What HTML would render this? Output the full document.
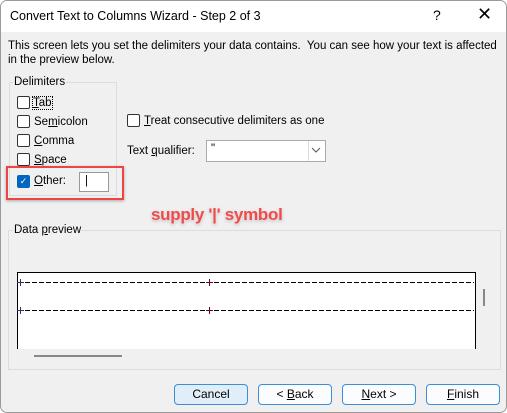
<!DOCTYPE html><html><head><style>
*{margin:0;padding:0;box-sizing:border-box}
body{width:507px;height:413px;background:#fff;font-family:"Liberation Sans",sans-serif;font-size:11.5px;color:#000;position:relative;overflow:hidden}
.win{position:absolute;left:0;top:0;width:507px;height:413px;border:1px solid #9a9a9a;border-radius:7px;background:#f0f0f0;overflow:hidden}
.tb{position:absolute;left:0;top:0;width:100%;height:31px;background:#fff}
.a{position:absolute;white-space:nowrap}
.cb{position:absolute;width:13px;height:13px;border:1px solid #333;border-radius:2px;background:#fff}
.grp{position:absolute;border:1px solid #dcdcdc}
.btn{position:absolute;top:383px;width:74px;height:21px;border:1px solid #3c8fd6;border-radius:4px;background:#fafcfe;text-align:center;line-height:19px;font-size:12px}
.dash{position:absolute;left:17px;width:456px;height:1px;background:repeating-linear-gradient(90deg,#000 0 5px,transparent 5px 7px)}
u{text-decoration:underline}
.pl{position:absolute;width:7px;height:7px}
</style></head><body><div class="win">
<div class="tb"></div>
<div class="a" style="left:9px;top:8px;font-size:12.5px">Convert Text to Columns Wizard - Step 2 of 3</div>
<div class="a" style="left:432px;top:6px;font-size:14px">?</div>
<div class="a" style="left:476px;top:3px;font-size:18px">✕</div>
<div class="a" style="left:7px;top:38px;line-height:14px">This screen lets you set the delimiters your data contains.&nbsp; You can see how your text is affected<br>in the preview below.</div>
<div class="grp" style="left:8px;top:81px;width:108px;height:114px"></div>
<div class="a" style="left:12px;top:75px;background:#f0f0f0;padding:0 1px">Delimiters</div>
<div class="cb" style="left:16px;top:95px"></div><div class="a" style="left:32px;top:96px;outline:1px dotted #000"><u>T</u>ab</div>
<div class="cb" style="left:16px;top:114px"></div><div class="a" style="left:33px;top:115px">Se<u>m</u>icolon</div>
<div class="cb" style="left:16px;top:133px"></div><div class="a" style="left:33px;top:134px"><u>C</u>omma</div>
<div class="cb" style="left:16px;top:152px"></div><div class="a" style="left:33px;top:153px"><u>S</u>pace</div>
<div class="cb" style="left:16px;top:174px;background:#0067c0;border-color:#0067c0;color:#fff;font-size:9px;line-height:11px;text-align:center">✓</div><div class="a" style="left:33px;top:174px"><u>O</u>ther:</div>
<div class="a" style="left:78px;top:171px;width:30px;height:20px;border:1px solid #999;background:#fff;padding:2px 5px">|</div>
<div class="a" style="left:5px;top:165px;width:118px;height:34px;border:2px solid #ee4444;box-shadow:0 1px 3px rgba(0,0,0,.3)"></div>
<div class="cb" style="left:126px;top:113px"></div><div class="a" style="left:143px;top:114px"><u>T</u>reat consecutive delimiters as one</div>
<div class="a" style="left:126px;top:144px">Text <u>q</u>ualifier:</div>
<div class="a" style="left:205px;top:139px;width:120px;height:22px;border:1px solid #aaa;background:#fff;padding:2px 4px">"</div>
<div class="a" style="left:307px;top:140px;width:1px;height:20px;background:#ddd"></div>
<svg class="a" style="left:310px;top:146px" width="10" height="7"><path d="M1 1l4 4 4-4" fill="none" stroke="#555"/></svg>
<div class="a" style="left:150px;top:204px;font-size:17px;font-weight:bold;color:#f04a4a;letter-spacing:-0.3px;text-shadow:0 0 3px #fff,0 1px 3px rgba(0,0,0,.35)">supply '|' symbol</div>
<div class="grp" style="left:7px;top:229px;width:493px;height:140px"></div>
<div class="a" style="left:12px;top:223px;background:#f0f0f0;padding:0 1px">Data <u>p</u>review</div>
<div class="a" style="left:16px;top:271px;width:459px;height:77px;background:#fff;border:1px solid #000;border-bottom:none"></div>
<div class="dash" style="top:281px"></div><div class="dash" style="top:309px"></div>
<svg class="pl" style="left:16px;top:278px"><path d="M3.5 0v7M0 3.5h7" stroke="#336"/></svg>
<svg class="pl" style="left:205px;top:278px"><path d="M3.5 0v7M0 3.5h7" stroke="#603"/></svg>
<svg class="pl" style="left:16px;top:306px"><path d="M3.5 0v7M0 3.5h7" stroke="#336"/></svg>
<svg class="pl" style="left:205px;top:306px"><path d="M3.5 0v7M0 3.5h7" stroke="#603"/></svg>
<div class="a" style="left:482px;top:288px;width:2px;height:17px;background:#888"></div>
<div class="a" style="left:33px;top:354px;width:88px;height:2px;background:#888"></div>
<div class="btn" style="left:173px;background:#e0eef9">Cancel</div>
<div class="btn" style="left:257px">&lt; <u>B</u>ack</div>
<div class="btn" style="left:341px"><u>N</u>ext &gt;</div>
<div class="btn" style="left:425px"><u>F</u>inish</div>
</div></body></html>
